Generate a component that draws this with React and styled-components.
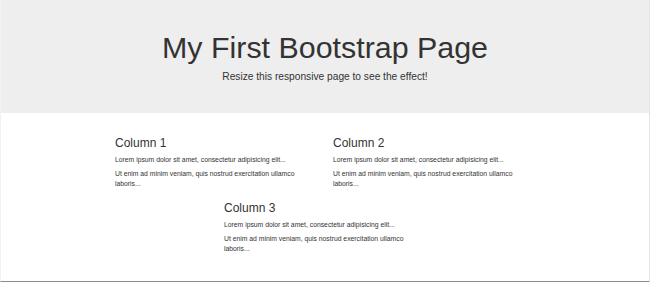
import React from 'react';
import styled, { createGlobalStyle } from 'styled-components';

const GlobalStyle = createGlobalStyle`
  body {
    margin: 0;
    font-family: "Liberation Sans", Arial, sans-serif;
    color: #333;
    background: #fff;
  }
`;

const Page = styled.div`
  height: 282px;
  box-sizing: border-box;
  border-left: 1px solid #f2f2f2;
  border-right: 1px solid #e4e4e4;
  border-bottom: 1px solid #8c8c8c;
`;

const Jumbotron = styled.div`
  background: #eee;
  height: 113px;
  box-sizing: border-box;
  padding-top: 29px;
  text-align: center;
`;

const Title = styled.h1`
  margin: 0;
  font-size: 30.4px;
  font-weight: 400;
  line-height: 36px;
  color: #333;
`;

const Lead = styled.p`
  margin: 5px 0 0;
  font-size: 10.2px;
  line-height: 14px;
  color: #333;
`;

const Section = styled.div`
  padding: 23px 0 0 16px;
`;

const Row = styled.div`
  width: 436px;
  margin: 0 auto;
  display: flex;
  flex-wrap: wrap;
  justify-content: center;
  row-gap: 10px;
`;

const Col = styled.div`
  width: 218px;
  height: 55px;
`;

const Heading = styled.h3`
  margin: 0 0 4px;
  font-size: 12px;
  font-weight: 400;
  line-height: 15px;
  color: #333;
`;

const Text = styled.p`
  margin: 0 0 4px;
  max-width: 196px;
  font-size: 6.8px;
  line-height: 10px;
  color: #333;
`;

const columns = ['Column 1', 'Column 2', 'Column 3'];

export default function App() {
  return (
    <Page>
      <GlobalStyle />
      <Jumbotron>
        <Title>My First Bootstrap Page</Title>
        <Lead>Resize this responsive page to see the effect!</Lead>
      </Jumbotron>
      <Section>
        <Row>
          {columns.map((c) => (
            <Col key={c}>
              <Heading>{c}</Heading>
              <Text>Lorem ipsum dolor sit amet, consectetur adipisicing elit...</Text>
              <Text>Ut enim ad minim veniam, quis nostrud exercitation ullamco laboris...</Text>
            </Col>
          ))}
        </Row>
      </Section>
    </Page>
  );
}
